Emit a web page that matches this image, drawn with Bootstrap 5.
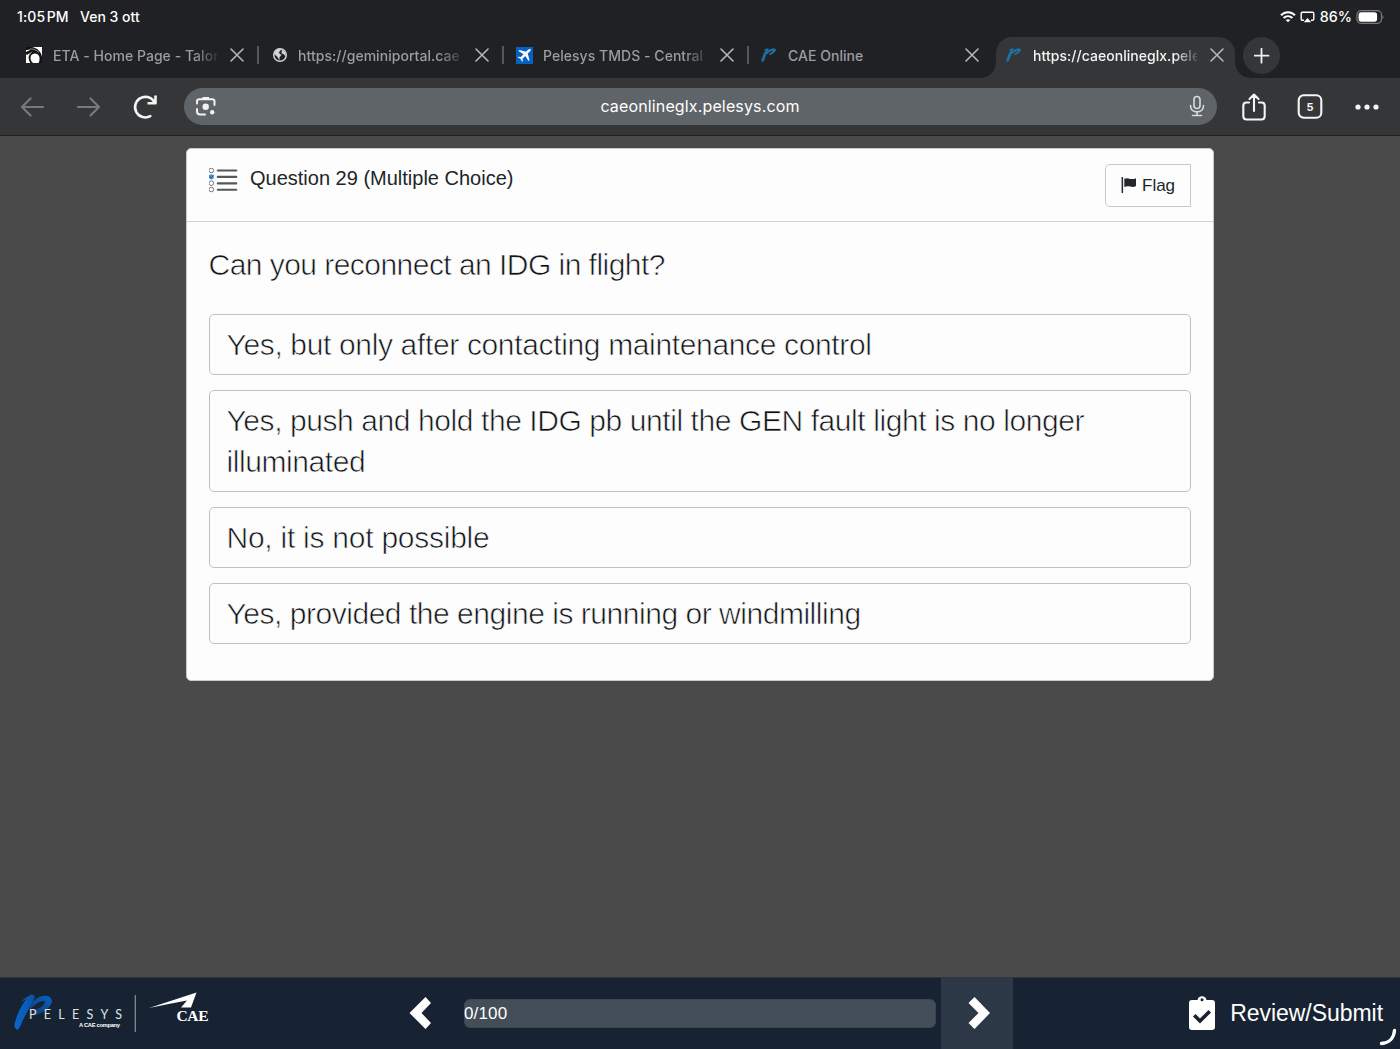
<!DOCTYPE html>
<html lang="en">
<head>
<meta charset="utf-8">
<meta name="viewport" content="width=device-width, initial-scale=1">
<title>caeonlineglx.pelesys.com</title>
<link href="https://cdn.jsdelivr.net/npm/bootstrap@5.3.0/dist/css/bootstrap.min.css" rel="stylesheet">
<style>
html, body { height: 100%; }
body { background: #4a4a4a; font-family: "Liberation Sans", Arial, sans-serif; overflow: hidden; color: #212529; }
svg { display: block; flex: none; }
.chrome-ui { font-family: Inter, sans-serif; background: #202124; color: #fff; }
.status-row { height: 33px; padding: 0 16px 0 17px; font-size: 14px; font-weight: 500; }
.status-row .clock { letter-spacing: .15px; width: 63px; white-space: nowrap; }
.status-row .pct { font-size: 14.3px; margin-left: 5px; }
.tabs-row { height: 45px; padding: 4px 0 0 12px; }
.tab-item { width: 245px; height: 41px; padding: 0 13px 5px 13px; position: relative; color: #9a9da1; font-size: 14px; font-weight: 500; }
.tab-item svg.fav { width: 18px; height: 18px; margin-right: 10px; }
.tab-label { flex: 1 1 0; min-width: 0; white-space: nowrap; letter-spacing: .04px; -webkit-mask-image: linear-gradient(90deg, #000 86%, rgba(0,0,0,.15)); mask-image: linear-gradient(90deg, #000 86%, rgba(0,0,0,.15)); }
.tab-label.fits { -webkit-mask-image: none; mask-image: none; }
.tab-item .x { margin-left: 13px; }
.tab-item.sep::after { content: ""; position: absolute; right: -2px; top: 9px; width: 2px; height: 18px; background: #54585c; }
.tab-item.current { background: #353638; color: #f4f4f4; border-radius: 16px 16px 0 0; width: 239px; margin-left: 4px; padding: 0 11px 5px 9px; }
.tab-item.current::before, .tab-item.current::after { content: ""; position: absolute; bottom: 0; width: 15px; height: 15px; }
.tab-item.current::before { left: -15px; background: radial-gradient(circle at 0 0, transparent 14.5px, #353638 15px); }
.tab-item.current::after { right: -15px; background: radial-gradient(circle at 100% 0, transparent 14.5px, #353638 15px); }
.plus-btn { width: 37px; height: 37px; border-radius: 50%; background: #353638; margin: 0 0 4px 8px; }
.tool-row { height: 58px; background: #353638; border-bottom: 1px solid #202124; padding: 0 20px 0 20px; }
.gap-fwd { margin-left: 31px; }
.gap-reload { margin-left: 31px; }
.omni { width: 1033px; height: 37px; border-radius: 19px; background: #5f6469; padding: 0 11px; font-size: 16px; margin-left: 25.5px; margin-top: -1px; }
.omni .url { letter-spacing: .14px; margin-right: 4px; padding-bottom: 1px; }
.gap-share { margin-left: 24.500px; }
.gap-count { margin-left: 30px; }
.gap-more { margin-left: 32px; }
.q-card { width: 1028.5px; height: 532.5px; margin: 12px 0 0 185.5px; background: #fdfdfd; border: 1px solid #c9c9c9; border-radius: 5px; }
.q-head { height: 73px; border-bottom: 1px solid #cfd1d3; padding: 15px 22px 0; }
.q-title { font-size: 20px; line-height: 28px; margin-left: 12.5px; }
.flag-btn { width: 86px; height: 43px; border: 1.5px solid #c9c9c9; border-radius: 5px 0 0 5px; font-size: 17px; padding-left: 15px; }
.flag-btn span { margin-left: 5px; }
.q-body { padding: 22px 22px 0; }
.thin-type { font-size: 30px; line-height: 41px; -webkit-text-stroke: .65px #fdfdfd; color: #111417; letter-spacing: -.42px; }
.thin-type .t1 { letter-spacing: -.35px; }
.thin-type .t3 { letter-spacing: -.25px; }
.thin-type .t4 { letter-spacing: -.47px; }
.question { letter-spacing: -.54px; }
.opts { margin-top: 29px; gap: 15px; }
.opt { border: 1px solid #bfc1c3; border-radius: 5px; padding: 9px 17px; height: 61px; }
.opt.tall { height: 102px; }
.foot { height: 72px; background: #172332; color: #fff; border-top: 1px solid #2c3540; padding-bottom: 1px; }
.meter { width: 472px; height: 29px; border-radius: 6px; background: #434e59; border: 1px solid #3b4650; font-size: 17px; line-height: 27px; margin-left: 31px; letter-spacing: .15px; }
.meter span { margin-left: -1px; }
.gap-prev { margin-left: 189px; }
.next-cell { width: 72px; height: 71px; background: #2d3846; margin-left: 5px; }
.review { font-size: 23px; margin-right: 17px; letter-spacing: -.05px; }
.review span { margin-left: 14px; }
.busy { position: absolute; right: 3px; bottom: 3px; }
</style>
<script src="https://cdn.jsdelivr.net/npm/bootstrap@5.3.0/dist/js/bootstrap.bundle.min.js"></script>
</head>
<body class="d-flex flex-column">
<svg width="0" height="0" class="position-absolute">
  <symbol id="cross" viewBox="0 0 14 14"><path d="M1 1l12 12M13 1L1 13" stroke="#b4b6b8" stroke-width="1.6" stroke-linecap="round"/></symbol>
  <symbol id="pmark" viewBox="0 0 18 18"><g fill="#1c72a5" stroke="#1c72a5" stroke-width=".7" stroke-linejoin="round"><path d="M4.500 3.800Q7 2.500 8.500 3Q6 7.500 3.500 15L1.800 15.700Q1.500 14 2.500 12Q4 7 6 4.300Q5 4.500 4.500 3.800z"/><path d="M7 6.500C9 3.500 13 2 15.200 3C16.500 4.500 13.500 7.800 9.800 8.700C9 8.500 9.500 7.500 10.500 7.200C12.500 6.400 13.300 5.300 12.500 4.800C11 4.500 9 5.800 7 8z"/></g></symbol>
</svg>
<header class="chrome-ui">
  <div class="status-row d-flex align-items-center">
    <span class="clock">1:05&#8202;PM</span><span>Ven 3 ott</span>
    <div class="ms-auto d-flex align-items-center">
      <svg width="16" height="12" viewBox="0 0 16 12" fill="none" stroke="#fff" stroke-width="2"><path d="M1 4.300C5 .2 11 .2 15 4.300M3.600 7C6.200 4.500 9.800 4.500 12.400 7"/><path d="M5.700 8.900C7 7.900 9 7.900 10.300 8.900L8 11.300z" fill="#fff" stroke="none"/></svg>
      <svg class="ms-1" width="15" height="12" viewBox="0 0 15 12"><path d="M4 9.300H2.500Q1.200 9.300 1.200 8V2.500Q1.200 1.200 2.500 1.200H12.500Q13.800 1.200 13.800 2.500V8Q13.800 9.300 12.500 9.300H11" fill="none" stroke="#fff" stroke-width="1.400"/><path d="M7.500 7L11.200 11.300H3.800z" fill="#fff"/></svg>
      <span class="pct">86%</span>
      <svg class="ms-1" width="28" height="14" viewBox="0 0 28 14"><rect x="1" y=".7" width="24.500" height="12.600" rx="4" fill="none" stroke="#77797b" stroke-width="1.200"/><rect x="2.600" y="2.300" width="18.500" height="9.400" rx="2.600" fill="#fff"/><path d="M26.500 4.700q2 2.300 0 4.600z" fill="#77797b"/></svg>
    </div>
  </div>
  <nav class="tabs-row d-flex align-items-center">
    <div class="tab-item sep d-flex align-items-center"><svg class="fav" viewBox="0 0 18 18"><path fill="#fff" d="M1 1h16v16H1z"/><path d="M1 1h6C12 2 16 5 17 11V17H13.500Q16 12 13 8.500Q9 6 6 9.500Q4.500 14 8 17H5.500C3 14 3 8 6 6L2 9L1 8V6L5 4L1 4z" fill="#111"/><path d="M3 4Q8 1 14 6.500M2 12L7 5.500" stroke="#ddd" stroke-width=".6" fill="none"/></svg><span class="tab-label">ETA - Home Page - Talor</span><svg class="x" width="14" height="14"><use href="#cross"/></svg></div>
    <div class="tab-item sep d-flex align-items-center"><svg class="fav" viewBox="0 0 18 18"><circle cx="10" cy="9" r="6.300" fill="#202124" stroke="#d0d2d4" stroke-width="1.500"/><path d="M5 4.500L8 2.500L11 3L10 5.500L8.500 6L10 8L11.500 9L9.700 11L9.300 14.500L7.500 11L4 8zM12 3.500L15.500 6.500V10.500L13.500 8L11.500 7.500z" fill="#d0d2d4"/></svg><span class="tab-label">https://geminiportal.cae</span><svg class="x" width="14" height="14"><use href="#cross"/></svg></div>
    <div class="tab-item sep d-flex align-items-center"><svg class="fav" viewBox="0 0 18 18"><path fill="#0960c4" d="M1 1h17v17H1z"/><path d="M15.800 3.200Q14.300 2.500 12.800 4L11 5.800L4.500 4L3.500 5L8.500 8.200L5.800 11L3.500 10.700L2.700 11.500L5.500 12.800L7 15.800L7.800 15L7.500 12.700L10.300 10L13.500 15L14.500 14L12.700 7.500L14.800 5.500Q16.200 4 15.800 3.200z" fill="#fff"/></svg><span class="tab-label">Pelesys TMDS - Central</span><svg class="x" width="14" height="14"><use href="#cross"/></svg></div>
    <div class="tab-item d-flex align-items-center"><svg class="fav"><use href="#pmark"/></svg><span class="tab-label fits">CAE Online</span><svg class="x" width="14" height="14"><use href="#cross"/></svg></div>
    <div class="tab-item current d-flex align-items-center"><svg class="fav"><use href="#pmark"/></svg><span class="tab-label">https://caeonlineglx.pele</span><svg class="x" width="14" height="14"><use href="#cross"/></svg></div>
    <div class="plus-btn d-flex align-items-center justify-content-center"><svg width="16" height="16" viewBox="0 0 16 16"><path d="M7.500 .7v14M.5 7.700h14" stroke="#f0f0f0" stroke-width="1.800" stroke-linecap="round"/></svg></div>
  </nav>
  <div class="tool-row d-flex align-items-center">
    <svg width="25" height="20" viewBox="0 0 25 20" fill="none" stroke="#77797b" stroke-width="2.200" stroke-linecap="round" stroke-linejoin="round"><path d="M23 10H2M10.500 1.500L2 10l8.500 8.500"/></svg>
    <svg class="gap-fwd" width="25" height="20" viewBox="0 0 25 20" fill="none" stroke="#77797b" stroke-width="2.200" stroke-linecap="round" stroke-linejoin="round"><path d="M2 10h21M14.500 1.500L23 10l-8.500 8.500"/></svg>
    <svg class="gap-reload" width="26" height="26" viewBox="0 0 26 26" fill="none" stroke="#f5f5f5" stroke-width="2.600"><path d="M22 7.500A10.300 10.300 0 1 0 18.300 22.200" stroke-linecap="round"/><path d="M23.500 1.500V9.200H15.500" stroke-linejoin="round"/></svg>
    <div class="omni d-flex align-items-center justify-content-between">
      <svg width="22" height="22" viewBox="0 0 22 22" fill="none" stroke="#f2f2f2" stroke-width="2"><path d="M2 8.500V6.500Q2 4.200 4.500 4.200H17Q19.500 4.200 19.500 6.500V10M2 14V16.500Q2 19.500 5 19.500H10" stroke-linecap="round"/><path d="M7.500 2h6.500v2.500H7.500z" fill="#f2f2f2" stroke="none"/><circle cx="10.700" cy="11.700" r="3.200" fill="#f2f2f2" stroke="none"/><circle cx="17.200" cy="17.200" r="2.200" fill="#f2f2f2" stroke="none"/></svg>
      <span class="url">caeonlineglx.pelesys.com</span>
      <svg width="18" height="22" viewBox="0 0 18 22" fill="none" stroke="#d9dadb" stroke-width="1.600" stroke-linecap="round"><rect x="6" y="1.500" width="6" height="12" rx="3"/><path d="M2.500 10.500C2.500 19 15.500 19 15.500 10.500M9 17V20.500M4.500 20.500H13.500"/></svg>
    </div>
    <svg class="gap-share" width="26" height="28" viewBox="0 0 26 28" fill="none" stroke="#f5f5f5" stroke-width="2.100" stroke-linecap="round" stroke-linejoin="round"><path d="M8 9.500H5.500Q2.300 9.500 2.300 12.700V23.300Q2.300 26.500 5.500 26.500H20.500Q23.700 26.500 23.700 23.300V12.700Q23.700 9.500 20.500 9.500H18M13 18V1.500M8.500 6L13 1.500L17.500 6"/></svg>
    <svg class="gap-count" width="26" height="26" viewBox="0 0 26 26"><rect x="1.700" y="1.200" width="22.600" height="22.600" rx="5" fill="none" stroke="#f5f5f5" stroke-width="2.100"/><text x="13" y="16.800" font-size="11" font-weight="700" fill="#f5f5f5" text-anchor="middle">5</text></svg>
    <svg class="gap-more" width="24" height="6" viewBox="0 0 24 6" fill="#f5f5f5"><circle cx="3" cy="3" r="2.600"/><circle cx="12" cy="3" r="2.600"/><circle cx="21" cy="3" r="2.600"/></svg>
  </div>
</header>
<main class="flex-grow-1">
  <section class="q-card">
    <div class="q-head d-flex align-items-start">
      <svg class="mt-1" width="29" height="26" viewBox="0.700 0.500 29 26"><g fill="none" stroke="#777" stroke-width="1"><circle cx="3" cy="3" r="2.300"/><circle cx="3" cy="15.700" r="2.300"/><circle cx="3" cy="22" r="2.300"/></g><circle cx="3" cy="9.300" r="2.600" fill="#4b96e6"/><path d="M1.500 9l1.300 1.600L5.400 7.500" stroke="#285078" fill="none" stroke-width=".9"/><path d="M9.500 3H28M9.500 9.400H28M9.500 15.900H28M9.500 22.300H28" stroke="#555759" stroke-width="2.100" stroke-linecap="round"/></svg>
      <span class="q-title">Question 29 (Multiple Choice)</span>
      <div class="flag-btn ms-auto d-flex align-items-center"><svg width="16" height="17" viewBox="0 0 16 17" fill="#25282b"><path d="M.6 0h1.500v16H.6zM3.300 1.800C7 -.2 10 3.600 15 1.200V9C11 11.600 7.500 7.600 3.300 10z"/></svg><span>Flag</span></div>
    </div>
    <div class="q-body">
      <div class="thin-type"><span class="question">Can you reconnect an IDG in flight?</span></div>
      <div class="opts d-flex flex-column thin-type">
        <div class="opt t1">Yes, but only after contacting maintenance control</div>
        <div class="opt tall">Yes, push and hold the IDG pb until the GEN fault light is no longer<br>illuminated</div>
        <div class="opt t3">No, it is not possible</div>
        <div class="opt t4">Yes, provided the engine is running or windmilling</div>
      </div>
    </div>
  </section>
</main>
<footer class="foot d-flex align-items-center position-relative">
  <svg width="220" height="70" viewBox="0 0 220 70">
    <defs><linearGradient id="pg" x1="0" x2="1"><stop offset="0" stop-color="#0a66c8"/><stop offset=".7" stop-color="#0a5ab4"/><stop offset="1" stop-color="#0d4f9c"/></linearGradient><linearGradient id="pf" x1=".8" y1="0" x2=".3" y2="1"><stop offset="0" stop-color="#0a5ec0"/><stop offset=".5" stop-color="#0c4f9c"/><stop offset="1" stop-color="#143b69"/></linearGradient></defs>
    <path d="M30 28C34 20 43 16 49 18.500C56 23 50 32 36 37C32 38 33 33 37 31Q44 28 45 24C44 21 36 24 29 33z" fill="url(#pf)"/>
    <path d="M29 18C31 15.500 34 16 35 19C31 28 24 38 20 49L17.500 52Q14 50 14.500 46C17 36 22 26 27 20.500Q24 22 21 24.500Q24 20 29 18z" fill="url(#pg)"/>
    <text x="29" y="41" font-family="Lato" font-size="12.500" fill="#dfe4ea" textLength="93">PELESYS</text>
    <text x="79" y="49" font-family="Liberation Sans" font-size="5.800" font-weight="700" fill="#fff" textLength="41">A CAE company</text>
    <path d="M135.300 17v37" stroke="#8a929a" stroke-width="1.200"/>
    <path d="M149 30L196.500 14.500L191 29.500H181L187 22.500Q168 26 149 30z" fill="#fff"/>
    <text x="176.500" y="42.500" font-family="Liberation Serif" font-size="15.500" font-weight="700" fill="#fff" textLength="32">CAE</text>
  </svg>
  <svg class="gap-prev" width="24" height="34" viewBox="0 0 24 34"><path d="M16.500 1L22 7L12.500 17L22 27L16.500 33L.5 17z" fill="#fff"/></svg>
  <div class="meter"><span>0/100</span></div>
  <div class="next-cell d-flex align-items-center justify-content-center"><svg class="ms-1" width="24" height="34" viewBox="0 0 24 34"><path d="M7.500 1L1.500 7L11.500 17L1.500 27L7.500 33L23 17z" fill="#fff"/></svg></div>
  <div class="review ms-auto d-flex align-items-center">
    <svg width="28" height="36" viewBox="0 0 28 36"><path d="M4 5H9.500A4.600 4.600 0 0 1 18.500 5H24Q27 5 27 8V32Q27 35 24 35H4Q1 35 1 32V8Q1 5 4 5z" fill="#fff"/><circle cx="14" cy="4.700" r="1.500" fill="#172332"/><path d="M7.500 21.500L12 26L20.500 17.500" stroke="#172332" stroke-width="3.600" fill="none" stroke-linecap="square"/></svg>
    <span>Review/Submit</span>
  </div>
  <svg class="busy" width="18" height="18" viewBox="0 0 18 18"><path d="M15.500 2.500C15 10 10 15 2.500 15.500" fill="none" stroke="#fff" stroke-width="3.400" stroke-linecap="round"/></svg>
</footer>
</body>
</html>
